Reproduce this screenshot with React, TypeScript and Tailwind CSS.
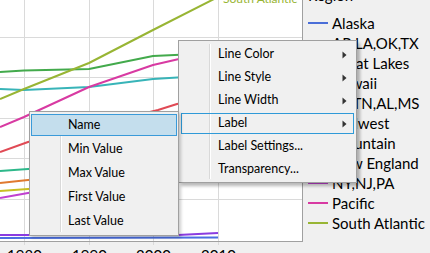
import React from 'react';

const ticks = [24.5, 89.5, 153.5, 218.5];
const years = ['1980', '1990', '2000', '2010'];
const hGrid = [37.5, 77.5, 118.5, 158.5, 199.5];

// series drawn in the plot, x = 0..218
const series = [
  { color: '#8a3ce0', pts: '0,235 100,235 178,235 218,233' },
  { color: '#4a6ee0', pts: '0,238 218,237.5' },
  { color: '#c040d0', pts: '0,198 28,193 89,184 153,176 218,166' },
  { color: '#c8bf22', pts: '0,191 28,189 89,186 153,182 218,175' },
  { color: '#e07a30', pts: '0,183 28,180 89,176 153,170 218,160' },
  { color: '#2eb88a', pts: '0,171 28,169 89,165 153,160 218,150' },
  { color: '#e04a55', pts: '0,152 28,142 89,127 158,110 177,104 218,96' },
  { color: '#38b4b8', pts: '0,89 24,90 89,87 153,79 218,75' },
  { color: '#43aa4c', pts: '0,72 24,70.5 89,69 153,56 218,53' },
  { color: '#d83aa2', pts: '0,127 24,117 89,87 153,65 218,50' },
  { color: '#98b534', pts: '0,99 24,89 89,63 153,30 218,-3' },
];

const legend = [
  { name: 'Alaska', color: '#4a6ed8' },
  { name: 'AR,LA,OK,TX', color: '#e04a55' },
  { name: 'Great Lakes', color: '#43aa4c' },
  { name: 'Hawaii', color: '#8a3ce0' },
  { name: 'KY,TN,AL,MS', color: '#e07a30' },
  { name: 'Midwest', color: '#38b4b8' },
  { name: 'Mountain', color: '#c8bf22' },
  { name: 'New England', color: '#2eb88a' },
  { name: 'NY,NJ,PA', color: '#c040d0' },
  { name: 'Pacific', color: '#d83aa2' },
  { name: 'South Atlantic', color: '#98b534' },
];

const mainItems = [
  { label: 'Line Color', arrow: true },
  { label: 'Line Style', arrow: true },
  { label: 'Line Width', arrow: true },
  { label: 'Label', arrow: true, focus: true },
  { label: 'Label Settings...' },
  { label: 'Transparency...' },
];

const subItems = ['Name', 'Min Value', 'Max Value', 'First Value', 'Last Value'];

function Arrow() {
  return (
    <svg width="5" height="8" viewBox="0 0 5 8" className="shrink-0">
      <path d="M0.5 0.5 L4.5 4 L0.5 7.5 Z" fill="#333" />
    </svg>
  );
}

function Chart() {
  return (
    <svg width="303" height="253" className="block shrink-0">
      <rect x="0" y="0" width="302" height="241" fill="#fff" />
      {hGrid.map((y) => (
        <line key={y} x1="0" x2="302" y1={y} y2={y} stroke="#dadada" />
      ))}
      {ticks.map((x) => (
        <line key={x} x1={x} x2={x} y1="0" y2="245" stroke="#dadada" />
      ))}
      {series.map((s) => (
        <polyline
          key={s.color}
          points={s.pts}
          fill="none"
          stroke={s.color}
          strokeWidth="2"
          strokeLinejoin="round"
        />
      ))}
      <text x="223" y="2.5" fontSize="12" fill="#98b534" fontFamily="Lato, sans-serif">
        South Atlantic
      </text>
      <line x1="302.5" x2="302.5" y1="0" y2="242" stroke="#a0a0a0" />
      <line x1="0" x2="303" y1="241.5" y2="241.5" stroke="#a0a0a0" />
      {ticks.map((x, i) => (
        <text
          key={x}
          x={x}
          y="261"
          textAnchor="middle"
          fontSize="15"
          fill="#000"
          fontFamily="Lato, sans-serif"
        >
          {years[i]}
        </text>
      ))}
    </svg>
  );
}

export default function App() {
  return (
    <div className="relative flex h-[253px] w-[430px] overflow-hidden bg-[#f0f0f0] font-['Lato',sans-serif] text-black">
      <Chart />

      {/* legend */}
      <div className="flex flex-col pl-[5px]">
        <div className="-mt-[15px] h-[20px] text-[15px] leading-[20px]">Region</div>
        <div className="mt-[8px] flex flex-col">
          {legend.map((l) => (
            <div key={l.name} className="flex h-[20px] items-center gap-[4px] whitespace-nowrap">
              <div className="h-[2px] w-[20px]" style={{ backgroundColor: l.color }} />
              <span className="text-[15px] leading-[20px]">{l.name}</span>
            </div>
          ))}
        </div>
      </div>

      {/* context menu */}
      <div className="absolute left-[178px] top-[40px] flex w-[179px] flex-col border border-[#a0a0a0] bg-[#f0f0f0] px-[2px] pb-[1px] pt-[2px] shadow-[3px_3px_3px_rgba(0,0,0,0.28)]">
        <div className="absolute bottom-[3px] left-[30px] top-[3px] w-[2px] border-l border-r border-l-[#d9d9d9] border-r-white" />
        {mainItems.map((it) => (
          <div
            key={it.label}
            className={`relative my-[1px] flex h-[21px] items-center justify-between border pl-[36px] pr-[6px] text-[12.5px] ${
              it.focus ? 'border-[#2f9ad8]' : 'border-transparent'
            }`}
          >
            <span>{it.label}</span>
            {it.arrow && <Arrow />}
          </div>
        ))}
      </div>

      {/* label submenu */}
      <div className="absolute left-[29px] top-[111px] flex w-[150px] flex-col border border-[#a0a0a0] bg-[#f0f0f0] px-[1px] pb-[2px] pt-[1px] shadow-[2px_2px_3px_rgba(0,0,0,0.2)]">
        <div className="absolute bottom-[3px] left-[30px] top-[3px] w-[2px] border-l border-r border-l-[#d9d9d9] border-r-white" />
        {subItems.map((label, i) => (
          <div
            key={label}
            className={`relative my-[1px] flex h-[22px] items-center border pl-[36px] text-[12.5px] ${
              i === 0 ? 'border-[#3a9ad9] bg-[#c4deed]' : 'border-transparent'
            }`}
          >
            {label}
          </div>
        ))}
      </div>
    </div>
  );
}
